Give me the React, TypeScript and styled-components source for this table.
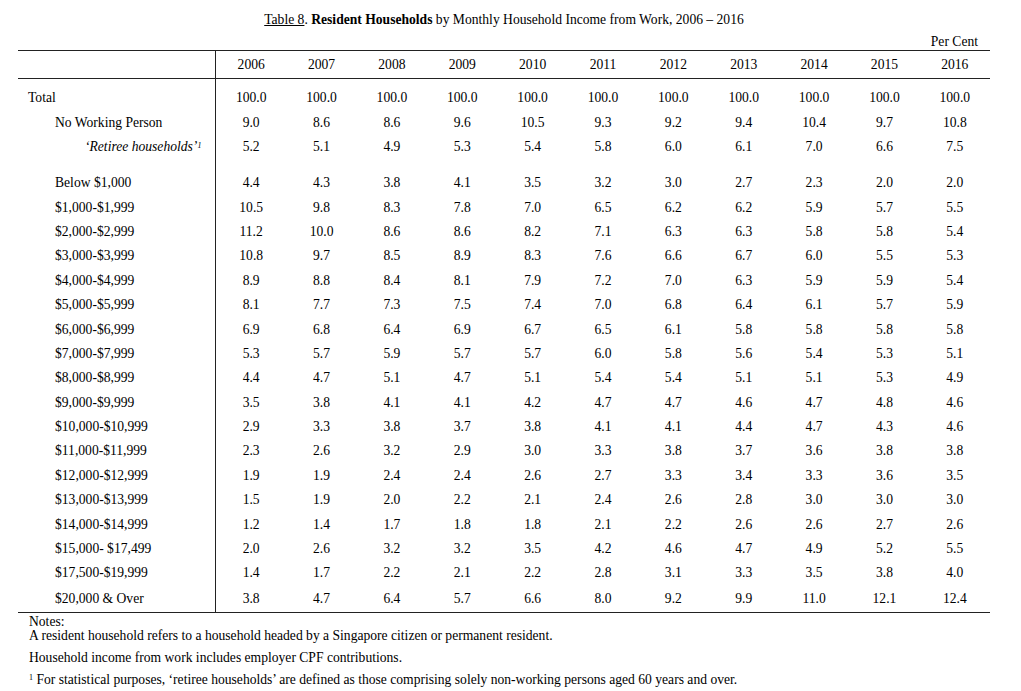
import React from "react";
import styled, { createGlobalStyle } from "styled-components";

const GlobalStyle = createGlobalStyle`
  html, body {
    margin: 0;
    padding: 0;
    background: #fff;
  }
  body {
    font-family: "Liberation Serif", "Times New Roman", serif;
    color: #000;
  }
`;

const Page = styled.div`
  width: 972px;
  margin-left: 18px;
  font-size: 13.6px;
`;

const Title = styled.div`
  margin-top: 12px;
  height: 16px;
  line-height: 16px;
  text-align: center;
  u {
    text-decoration: underline;
  }
`;

const Unit = styled.div`
  margin-top: 6px;
  height: 16px;
  line-height: 16px;
  text-align: right;
  padding-right: 12px;
`;

const Table = styled.div`
  border-top: 1px solid #222;
  border-bottom: 1px solid #222;
`;

const Row = styled.div<{ $h: number; $rule?: boolean }>`
  display: grid;
  grid-template-columns: 198px repeat(11, 1fr);
  height: ${({ $h }) => $h}px;
  align-items: center;
  border-bottom: ${({ $rule }) => ($rule ? "1px solid #222" : "none")};
`;

const Label = styled.div<{ $indent: number; $italic?: boolean }>`
  align-self: stretch;
  display: flex;
  align-items: center;
  padding-left: ${({ $indent }) => $indent}px;
  border-right: 1px solid #222;
  font-style: ${({ $italic }) => ($italic ? "italic" : "normal")};
  white-space: nowrap;
  sup {
    font-size: 8px;
    line-height: 0;
    position: relative;
    top: -1px;
  }
`;

const Cell = styled.div`
  text-align: center;
`;

const Notes = styled.div`
  margin-top: 2px;
  padding-left: 11px;
`;

const NoteLine = styled.div<{ $gap?: number }>`
  margin-top: ${({ $gap }) => $gap ?? 0}px;
  height: 14px;
  line-height: 14px;
  white-space: nowrap;
  sup {
    font-size: 8px;
    line-height: 0;
    vertical-align: 4px;
  }
`;

const years = [2006, 2007, 2008, 2009, 2010, 2011, 2012, 2013, 2014, 2015, 2016];

type DataRow = { label: string; values: string[] };

const incomeRows: DataRow[] = [
  { label: "Below $1,000", values: ["4.4", "4.3", "3.8", "4.1", "3.5", "3.2", "3.0", "2.7", "2.3", "2.0", "2.0"] },
  { label: "$1,000-$1,999", values: ["10.5", "9.8", "8.3", "7.8", "7.0", "6.5", "6.2", "6.2", "5.9", "5.7", "5.5"] },
  { label: "$2,000-$2,999", values: ["11.2", "10.0", "8.6", "8.6", "8.2", "7.1", "6.3", "6.3", "5.8", "5.8", "5.4"] },
  { label: "$3,000-$3,999", values: ["10.8", "9.7", "8.5", "8.9", "8.3", "7.6", "6.6", "6.7", "6.0", "5.5", "5.3"] },
  { label: "$4,000-$4,999", values: ["8.9", "8.8", "8.4", "8.1", "7.9", "7.2", "7.0", "6.3", "5.9", "5.9", "5.4"] },
  { label: "$5,000-$5,999", values: ["8.1", "7.7", "7.3", "7.5", "7.4", "7.0", "6.8", "6.4", "6.1", "5.7", "5.9"] },
  { label: "$6,000-$6,999", values: ["6.9", "6.8", "6.4", "6.9", "6.7", "6.5", "6.1", "5.8", "5.8", "5.8", "5.8"] },
  { label: "$7,000-$7,999", values: ["5.3", "5.7", "5.9", "5.7", "5.7", "6.0", "5.8", "5.6", "5.4", "5.3", "5.1"] },
  { label: "$8,000-$8,999", values: ["4.4", "4.7", "5.1", "4.7", "5.1", "5.4", "5.4", "5.1", "5.1", "5.3", "4.9"] },
  { label: "$9,000-$9,999", values: ["3.5", "3.8", "4.1", "4.1", "4.2", "4.7", "4.7", "4.6", "4.7", "4.8", "4.6"] },
  { label: "$10,000-$10,999", values: ["2.9", "3.3", "3.8", "3.7", "3.8", "4.1", "4.1", "4.4", "4.7", "4.3", "4.6"] },
  { label: "$11,000-$11,999", values: ["2.3", "2.6", "3.2", "2.9", "3.0", "3.3", "3.8", "3.7", "3.6", "3.8", "3.8"] },
  { label: "$12,000-$12,999", values: ["1.9", "1.9", "2.4", "2.4", "2.6", "2.7", "3.3", "3.4", "3.3", "3.6", "3.5"] },
  { label: "$13,000-$13,999", values: ["1.5", "1.9", "2.0", "2.2", "2.1", "2.4", "2.6", "2.8", "3.0", "3.0", "3.0"] },
  { label: "$14,000-$14,999", values: ["1.2", "1.4", "1.7", "1.8", "1.8", "2.1", "2.2", "2.6", "2.6", "2.7", "2.6"] },
  { label: "$15,000- $17,499", values: ["2.0", "2.6", "3.2", "3.2", "3.5", "4.2", "4.6", "4.7", "4.9", "5.2", "5.5"] },
  { label: "$17,500-$19,999", values: ["1.4", "1.7", "2.2", "2.1", "2.2", "2.8", "3.1", "3.3", "3.5", "3.8", "4.0"] },
  { label: "$20,000 & Over", values: ["3.8", "4.7", "6.4", "5.7", "6.6", "8.0", "9.2", "9.9", "11.0", "12.1", "12.4"] },
];

const noWork = ["9.0", "8.6", "8.6", "9.6", "10.5", "9.3", "9.2", "9.4", "10.4", "9.7", "10.8"];
const retiree = ["5.2", "5.1", "4.9", "5.3", "5.4", "5.8", "6.0", "6.1", "7.0", "6.6", "7.5"];

const Cells = ({ values }: { values: string[] }) => (
  <>
    {values.map((v, i) => (
      <Cell key={i}>{v}</Cell>
    ))}
  </>
);

const Spacer = ({ h }: { h: number }) => (
  <Row $h={h}>
    <Label $indent={0} />
  </Row>
);

export default function App() {
  return (
    <>
      <GlobalStyle />
      <Page>
        <Title>
          <u>Table 8</u>. <b>Resident Households</b> by Monthly Household Income from Work, 2006 – 2016
        </Title>
        <Unit>Per Cent</Unit>
        <Table>
          <Row $h={27} $rule>
            <Label $indent={0} />
            {years.map((y) => (
              <Cell key={y}>{y}</Cell>
            ))}
          </Row>
          <Spacer h={6} />
          <Row $h={25}>
            <Label $indent={10}>Total</Label>
            <Cells values={years.map(() => "100.0")} />
          </Row>
          <Row $h={26}>
            <Label $indent={37}>No Working Person</Label>
            <Cells values={noWork} />
          </Row>
          <Row $h={22}>
            <Label $indent={67} $italic>
              ‘Retiree households’<sup>1</sup>
            </Label>
            <Cells values={retiree} />
          </Row>
          <Spacer h={13} />
          {incomeRows.map((r, i) => (
            <Row key={r.label} $h={i === incomeRows.length - 1 ? 26 : 24.4}>
              <Label $indent={37}>{r.label}</Label>
              <Cells values={r.values} />
            </Row>
          ))}
        </Table>
        <Notes>
          <NoteLine>Notes:</NoteLine>
          <NoteLine>
            A resident household refers to a household headed by a Singapore citizen or permanent resident.
          </NoteLine>
          <NoteLine $gap={8}>Household income from work includes employer CPF contributions.</NoteLine>
          <NoteLine $gap={8}>
            <sup>1</sup> For statistical purposes, ‘retiree households’ are defined as those comprising solely
            non-working persons aged 60 years and over.
          </NoteLine>
        </Notes>
      </Page>
    </>
  );
}
